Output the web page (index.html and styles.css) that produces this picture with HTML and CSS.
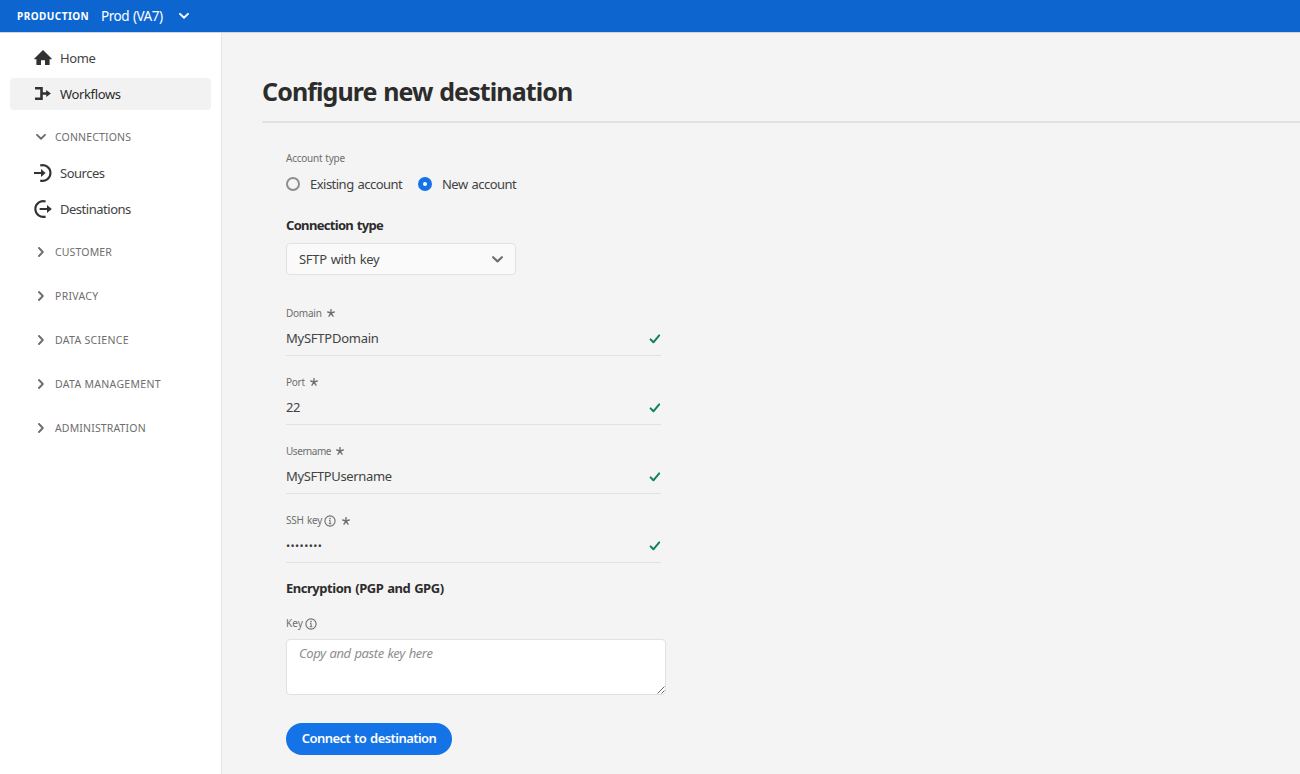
FILE: index.html
```html
<!DOCTYPE html>
<html lang="en">
<head>
<meta charset="utf-8">
<title>Configure new destination</title>
<link rel="stylesheet" href="styles.css">
</head>
<body>
<svg class="defs" width="0" height="0">
  <symbol id="chevron" viewBox="0 0 10 6"><path d="M1 .9 5 4.7 9 .9" fill="none" stroke="currentColor" stroke-width="1.9" stroke-linecap="round" stroke-linejoin="round"/></symbol>
  <symbol id="chevron-right" viewBox="0 0 6 10"><path d="M1 1 4.8 5 1 9" fill="none" stroke="currentColor" stroke-width="1.9" stroke-linecap="round" stroke-linejoin="round"/></symbol>
  <symbol id="check" viewBox="0 0 12 12"><path d="M1.6 6.4 4.4 9.3 10.2 2.4" fill="none" stroke="currentColor" stroke-width="2" stroke-linecap="round" stroke-linejoin="round"/></symbol>
  <symbol id="asterisk" viewBox="0 0 8 8"><path d="M4 4V.6M4 4 .7 3M4 4l3.3-1M4 4 2 7.2M4 4l2 3.2" fill="none" stroke="currentColor" stroke-width="1.35" stroke-linecap="round"/></symbol>
  <symbol id="info" viewBox="0 0 12 12"><circle cx="6" cy="6" r="5.1" fill="none" stroke="currentColor" stroke-width="1.1"/><circle cx="6" cy="3.6" r=".8" fill="currentColor"/><path d="M5 5.4h1.1V8.6M4.8 8.7h2.5" fill="none" stroke="currentColor" stroke-width="1"/></symbol>
</svg>
<header class="topbar">
  <span class="env">PRODUCTION</span>
  <span class="org">Prod (VA7)</span>
  <svg class="org-chevron"><use href="#chevron"/></svg>
</header>
<div class="shell">
  <nav class="sidebar">
    <a class="item"><svg class="nav-icon" viewBox="0 0 18 18"><path d="M9 .9 17.6 9.4c.4.5.2.8-.4.8H15.600v5.200c0 .4-.2.600-.6.600H11v-4.700H7V16H3c-.4 0-.6-.2-.6-.6v-5.200H.8c-.6 0-.8-.3-.4-.8Z" fill="#323232"/></svg><span>Home</span></a>
    <a class="item selected"><svg class="nav-icon" viewBox="0 0 18 18"><path d="M1 3.300h6.500v10.400H1M7.500 8.500H13" fill="none" stroke="#323232" stroke-width="2.600"/><path d="M12.200 4.900 16.900 8.500l-4.700 3.600Z" fill="#323232"/></svg><span>Workflows</span></a>
    <div class="section open"><svg class="down"><use href="#chevron"/></svg><span>CONNECTIONS</span></div>
    <a class="item"><svg class="nav-icon" viewBox="0 0 18 18"><path d="M6.200 1.600A7.800 7.800 0 1 1 6.200 16.400M0 9h8" fill="none" stroke="#323232" stroke-width="2.100"/><path d="M7 5 11.600 9 7 13Z" fill="#323232"/></svg><span class="tight">Sources</span></a>
    <a class="item"><svg class="nav-icon" viewBox="0 0 18 18"><path d="M11.600 1.600A7.800 7.800 0 1 0 11.600 16.400M5.600 9H14" fill="none" stroke="#323232" stroke-width="2.100"/><path d="M13 5 17.800 9 13 13Z" fill="#323232"/></svg><span class="tight">Destinations</span></a>
    <div class="section"><svg class="right"><use href="#chevron-right"/></svg><span>CUSTOMER</span></div>
    <div class="section"><svg class="right"><use href="#chevron-right"/></svg><span class="wide">PRIVACY</span></div>
    <div class="section"><svg class="right"><use href="#chevron-right"/></svg><span class="wide">DATA SCIENCE</span></div>
    <div class="section"><svg class="right"><use href="#chevron-right"/></svg><span class="wide">DATA MANAGEMENT</span></div>
    <div class="section"><svg class="right"><use href="#chevron-right"/></svg><span>ADMINISTRATION</span></div>
  </nav>
  <main class="content">
    <h1 class="title">Configure new destination</h1>
    <div class="form">
      <div class="label">Account type</div>
      <div class="radios">
        <span class="radio"></span><span class="radio-label existing">Existing account</span>
        <span class="radio on"></span><span class="radio-label">New account</span>
      </div>
      <h2 class="subhead">Connection type</h2>
      <div class="select"><span class="select-text">SFTP with key</span><svg class="select-chevron"><use href="#chevron"/></svg></div>
      <div class="field"><div class="label"><span>Domain</span><svg class="star"><use href="#asterisk"/></svg></div><div class="value"><span class="domain">MySFTPDomain</span><svg class="check"><use href="#check"/></svg></div></div>
      <div class="field"><div class="label"><span>Port</span><svg class="star"><use href="#asterisk"/></svg></div><div class="value"><span>22</span><svg class="check"><use href="#check"/></svg></div></div>
      <div class="field"><div class="label"><span class="username-label">Username</span><svg class="star"><use href="#asterisk"/></svg></div><div class="value"><span>MySFTPUsername</span><svg class="check"><use href="#check"/></svg></div></div>
      <div class="field"><div class="label ssh"><span class="ssh-text">SSH key</span><svg class="info"><use href="#info"/></svg><svg class="star"><use href="#asterisk"/></svg></div><div class="value"><span class="dots">••••••••</span><svg class="check"><use href="#check"/></svg></div></div>
      <h2 class="subhead encryption">Encryption (PGP and GPG)</h2>
      <div class="label key"><span class="key-text">Key</span><svg class="info"><use href="#info"/></svg></div>
      <div class="textarea"><span>Copy and paste key here</span><svg class="grip" viewBox="0 0 8 8"><path d="M.5 7.500 7.500.5M4.500 7.500l3-3" stroke="#555" stroke-width=".9"/></svg></div>
      <button class="connect">Connect to destination</button>
    </div>
  </main>
</div>
</body>
</html>
```
FILE: styles.css
```css
* { box-sizing: border-box; }
body { margin: 0; height: 774px; overflow: hidden; font-family: "Noto Sans", "Open Sans", sans-serif; font-size: 13px; letter-spacing: -.35px; color: #434343; background: #f4f4f4; }
svg { display: block; flex: none; }
.defs { position: absolute; }
span { white-space: nowrap; }
.topbar { height: 33px; display: flex; align-items: center; padding-left: 17px; background: #0d66d0; border-bottom: 1px solid #d5d5d5; color: #fff; }
.env { width: 84px; font-size: 10px; font-weight: 700; letter-spacing: .45px; }
.org { width: 78px; font-size: 13.5px; letter-spacing: -.5px; word-spacing: 1px; }
.org-chevron { width: 10px; height: 6px; }
.shell { display: flex; height: 741px; }
.sidebar { width: 222px; flex: none; padding: 9px 10px 0; background: #fff; border-right: 1px solid #e4e4e4; }
.item { display: flex; align-items: center; gap: 8px; height: 32px; margin-bottom: 4px; padding-left: 24px; border-radius: 4px; }
.nav-icon { width: 18px; height: 18px; }
.tight { letter-spacing: -.48px; }
.selected { background: #f2f2f2; color: #2c2c2c; }
.section { display: flex; align-items: center; height: 44px; padding: 2px 0 0 26px; font-size: 10.5px; letter-spacing: .15px; color: #6e6e6e; }
.section .wide { letter-spacing: .3px; }
.open { height: 43px; }
.down { width: 10px; height: 6px; margin-right: 9px; }
.right { width: 6px; height: 10px; margin: 0 11px 0 2px; }
.content { flex: 1; padding: 38px 0 0 40px; }
.title { height: 52px; margin: 0; border-bottom: 2px solid #e1e1e1; font-size: 25px; line-height: 40px; font-weight: 700; letter-spacing: -.9px; word-spacing: 1px; color: #2c2c2c; }
.form { padding: 28px 0 0 24px; }
.label { display: flex; align-items: center; height: 14px; font-size: 10px; line-height: 14px; letter-spacing: -.25px; word-spacing: .7px; color: #6e6e6e; }
.radios { display: flex; align-items: center; height: 20px; margin-top: 9px; letter-spacing: -.52px; word-spacing: 1px; }
.radio { width: 14px; height: 14px; margin-right: 10px; border: 2px solid #8e8e8e; border-radius: 50%; }
.radio.on { border: 5px solid #1473e6; background: #fff; }
.existing { width: 108px; }
.subhead { height: 20px; margin: 21px 0 0; font-size: 13px; line-height: 20px; font-weight: 700; letter-spacing: -.68px; word-spacing: 1px; color: #2c2c2c; }
.select { display: flex; align-items: center; justify-content: space-between; width: 230px; height: 32px; margin: 8px 0 31px; padding: 0 12px; border: 1px solid #e1e1e1; border-radius: 4px; background: #fafafa; }
.select-text { letter-spacing: -.3px; word-spacing: .8px; }
.select-chevron { width: 11px; height: 7px; color: #6e6e6e; }
.field { width: 375px; height: 50px; margin-bottom: 19px; border-bottom: 1px solid #e1e1e1; }
.star { width: 8px; height: 8px; margin-left: 5px; }
.username-label { letter-spacing: -.45px; }
.value { display: flex; align-items: center; justify-content: space-between; height: 22px; margin-top: 7px; }
.domain { letter-spacing: -.25px; }
.check { width: 12px; height: 12px; margin-top: 1px; color: #12805c; }
.ssh-text { letter-spacing: -.2px; }
.info { width: 12px; height: 12px; margin: 2px 0 0 2px; }
.key-text { letter-spacing: 0; }
.ssh .star { margin: 1px 0 0 6px; }
.dots { padding-top: 1px; font-size: 11px; letter-spacing: .4px; }
.encryption { margin-top: -4px; letter-spacing: -.47px; }
.key { margin: 18px 0 9px; }
.textarea { position: relative; width: 380px; height: 56px; padding: 4px 12px; border: 1px solid #e1e1e1; border-radius: 4px; background: #fff; font-style: italic; letter-spacing: -.4px; word-spacing: .8px; color: #8e8e8e; }
.grip { position: absolute; right: 0; bottom: 0; width: 8px; height: 8px; }
.connect { display: block; width: 166px; height: 32px; margin-top: 28px; padding: 0 0 2px; border: 0; border-radius: 16px; background: #1473e6; color: #fff; font: 600 13px "Noto Sans", "Open Sans", sans-serif; letter-spacing: -.55px; word-spacing: 1px; }
```
